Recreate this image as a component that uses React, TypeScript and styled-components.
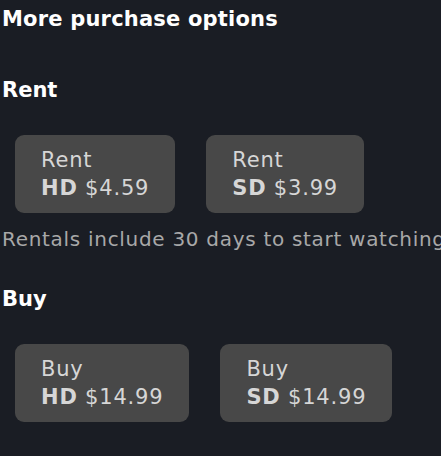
import styled, { createGlobalStyle } from 'styled-components';

const GlobalStyle = createGlobalStyle`
  body {
    margin: 0;
    background: #1a1d24;
    font-family: "DejaVu Sans", "Noto Sans", sans-serif;
  }
`;

const Page = styled.div`
  width: 441px;
  height: 456px;
  overflow: hidden;
  padding: 4px 0 0 2px;
  box-sizing: border-box;
`;

const Title = styled.h1`
  margin: 0 0 41px 0;
  font-size: 21px;
  line-height: 30px;
  font-weight: 700;
  letter-spacing: 0.2px;
  color: #ffffff;
  white-space: nowrap;
`;

const Section = styled.section`
  margin-bottom: 31px;
`;

const SectionTitle = styled.h2`
  margin: 0 0 30px 0;
  font-size: 21px;
  line-height: 30px;
  font-weight: 700;
  color: #ffffff;
`;

const OptionRow = styled.div`
  display: flex;
  gap: 31px;
  padding-left: 13px;
`;

const OptionButton = styled.button`
  display: flex;
  flex-direction: column;
  align-items: flex-start;
  justify-content: center;
  height: 78px;
  padding: 0 26px;
  border: none;
  border-radius: 9px;
  background: #484848;
  color: #d6d6d6;
  font-family: inherit;
  font-size: 21px;
  line-height: 28px;
  letter-spacing: 0.8px;
  cursor: pointer;
`;

const Quality = styled.span`
  font-weight: 700;
`;

const Note = styled.p`
  margin: 12px 0 0 0;
  font-size: 20px;
  line-height: 28px;
  letter-spacing: 0.7px;
  color: #a8a8a8;
  white-space: nowrap;
`;

type Option = { label: string; quality: string; price: string };

const rentOptions: Option[] = [
  { label: 'Rent', quality: 'HD', price: '$4.59' },
  { label: 'Rent', quality: 'SD', price: '$3.99' },
];

const buyOptions: Option[] = [
  { label: 'Buy', quality: 'HD', price: '$14.99' },
  { label: 'Buy', quality: 'SD', price: '$14.99' },
];

function Options({ items }: { items: Option[] }) {
  return (
    <OptionRow>
      {items.map((o) => (
        <OptionButton key={o.quality}>
          <span>{o.label}</span>
          <span>
            <Quality>{o.quality}</Quality> {o.price}
          </span>
        </OptionButton>
      ))}
    </OptionRow>
  );
}

export default function App() {
  return (
    <>
      <GlobalStyle />
      <Page>
        <Title>More purchase options</Title>

        <Section>
          <SectionTitle>Rent</SectionTitle>
          <Options items={rentOptions} />
          <Note>Rentals include 30 days to start watching</Note>
        </Section>

        <Section>
          <SectionTitle>Buy</SectionTitle>
          <Options items={buyOptions} />
        </Section>
      </Page>
    </>
  );
}
